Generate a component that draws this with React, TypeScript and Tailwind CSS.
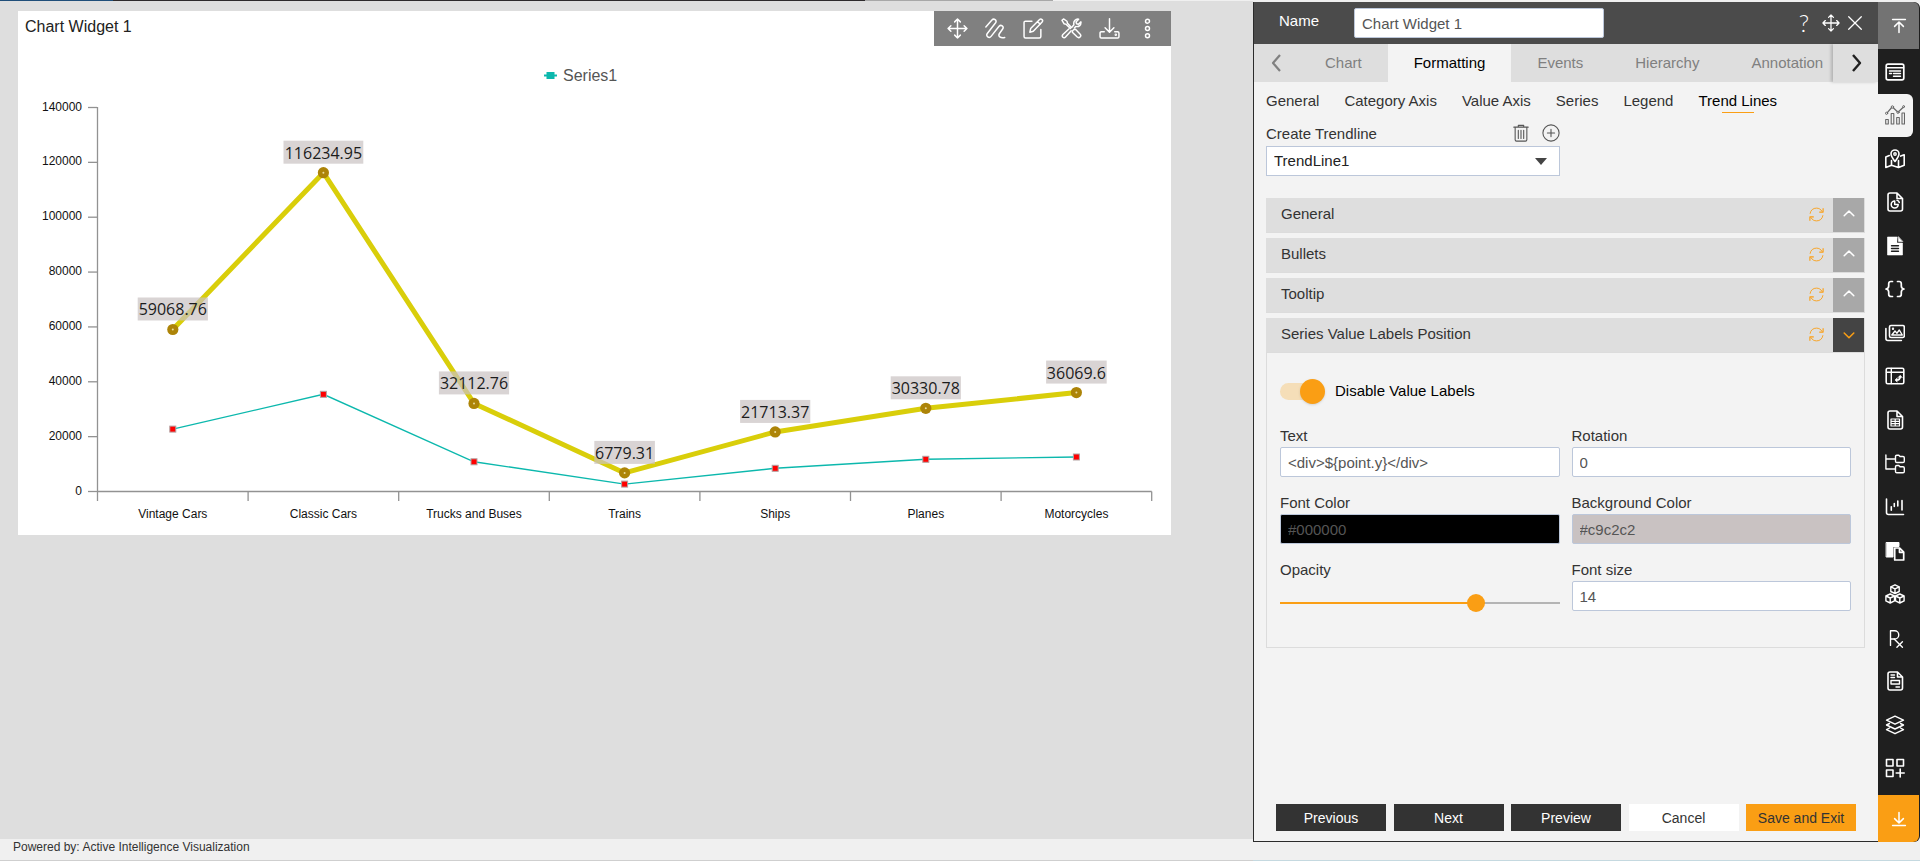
import { useState } from 'react';
import type { ReactNode } from 'react';
import { TbPrescription } from 'react-icons/tb';

type Point = { name: string; value: number; trend: number };

const points: Point[] = [
  { name: 'Vintage Cars', value: 22750, trend: 59068.76 },
  { name: 'Classic Cars', value: 35430, trend: 116234.95 },
  { name: 'Trucks and Buses', value: 10830, trend: 32112.76 },
  { name: 'Trains', value: 2700, trend: 6779.31 },
  { name: 'Ships', value: 8460, trend: 21713.37 },
  { name: 'Planes', value: 11740, trend: 30330.78 },
  { name: 'Motorcycles', value: 12580, trend: 36069.6 },
];

const yTicks = [0, 20000, 40000, 60000, 80000, 100000, 120000, 140000];

const tabs = ['Chart', 'Formatting', 'Events', 'Hierarchy', 'Annotation'];
const subTabs = ['General', 'Category Axis', 'Value Axis', 'Series', 'Legend', 'Trend Lines'];
const sections = ['General', 'Bullets', 'Tooltip', 'Series Value Labels Position'];

function Icon({ children, className = 'size-5' }: { children: ReactNode; className?: string }) {
  return (
    <svg
      viewBox="0 0 20 20"
      className={className}
      fill="none"
      stroke="currentColor"
      strokeWidth="1.4"
      strokeLinecap="round"
      strokeLinejoin="round"
      aria-hidden="true"
    >
      {children}
    </svg>
  );
}

const moveIcon = <path d="M10 1v18M1 10h18M7.3 3.7 10 1l2.7 2.7M7.3 16.3 10 19l2.7-2.7M3.7 7.3 1 10l2.7 2.7M16.3 7.3 19 10l-2.7 2.7" />;

const toolbar: { label: string; icon: ReactNode }[] = [
  { label: 'Move', icon: moveIcon },
  {
    label: 'Trend',
    icon: <path d="M.8 8.5 6.6 1.9c1.9-2 5 .3 3.5 2.6L2.2 14.8c-1.700 2.400 1.700 5 3.600 2.700l7.600-9.600c1.800-2.100 5 .3 3.400 2.600l-3 4.300c-1.700 2.500.8 4.700 5 3.800" />,
  },
  {
    label: 'Edit',
    icon: (
      <>
        <path d="M8.500 3H2.400C1.600 3 1 3.600 1 4.400v13.200c0 .8.600 1.400 1.400 1.400h13.200c.8 0 1.400-.6 1.400-1.400V11" />
        <path d="m6.500 13.500.8-3.400 8.500-8.600c1.500-1.400 3.900.7 2.400 2.400l-8.400 8.700zM14 3.500l2.400 2.400" />
      </>
    ),
  },
  {
    label: 'Tools',
    icon: (
      <>
        <path d="m1 2.200 1.400-1.300 3.300 2.200.5 2L10 9M1 2.200l2 3.300 2 .6 4 3.900M12.300 11l1.500-.3 4.500 4.700c1.600 1.800-1 4.300-2.800 2.700l-4.700-4.600.3-1.400z" />
        <path d="M7.700 10.200 1.800 15.800c-1.600 1.700.9 4.100 2.500 2.400l5.400-6M10.500 8.500l1.800-2.100c-.8-3 1.500-5.700 4.500-5.300l-2.500 2.600.5 1.800 1.800.5 2.400-2.300c.3 3-1.800 5-5 4.400L12.800 9.500" />
      </>
    ),
  },
  {
    label: 'Download',
    icon: (
      <>
        <path d="M10 .8v12.500M5.800 9.300l4.200 4.200 4.200-4.200M5 13H2.200c-.7 0-1.200.5-1.200 1.200v3.600c0 .7.500 1.200 1.200 1.200h15.600c.7 0 1.200-.5 1.200-1.200v-3.600c0-.7-.5-1.200-1.200-1.200H15" />
        <circle cx="16" cy="16" r=".5" />
      </>
    ),
  },
  {
    label: 'More',
    icon: (
      <>
        <circle cx="10" cy="3" r="1.9" />
        <circle cx="10" cy="10" r="1.9" />
        <circle cx="10" cy="17" r="1.9" />
      </>
    ),
  },
];

const rail: { label: string; icon: ReactNode }[] = [
  {
    label: 'Form',
    icon: (
      <>
        <rect x="1.200" y="2.200" width="17.600" height="15.600" rx="1.800" strokeWidth="1.700" />
        <path d="M1.500 5.700h17M4.500 9h11M4.500 11.500h2M8.500 11.500h7M8.500 14.300h7" />
      </>
    ),
  },
  {
    label: 'Chart',
    icon: (
      <>
        <path d="M.7 14.500h2.600V19H.7zM6.200 8.500h2.600V19H6.200zM11.700 12.500h2.600V19h-2.600zM17 8h2.500v11H17z" strokeWidth="1.100" />
        <path d="M2.500 7.300 6.300 3M8.500 3l3.700 3.500M14 6.300 18 2.500" strokeWidth="1.200" />
        <circle cx="1.600" cy="8.300" r="1.100" strokeWidth="1" />
        <circle cx="7.400" cy="2" r="1.200" strokeWidth="1" />
        <circle cx="13" cy="7.300" r="1.100" strokeWidth="1" />
        <circle cx="18.700" cy="1.600" r="1" strokeWidth="1" />
      </>
    ),
  },
  {
    label: 'Map',
    icon: (
      <>
        <path d="M10 12.500C8 9.800 6 7.300 6 5a4 4 0 0 1 8 0c0 2.300-2 4.800-4 7.500z" strokeWidth="1.600" />
        <circle cx="10" cy="5" r="1.200" />
        <path d="M4.300 6.500.8 8v10.500l5.700-2.300 7 2.300 5.700-2.300V5.800l-3.500 1.300M6.500 11.500v4.700M13.500 11.500v7" strokeWidth="1.600" />
      </>
    ),
  },
  {
    label: 'Report',
    icon: (
      <>
        <path d="M12 1H5C3.800 1 3 1.800 3 3v14c0 1.200.8 2 2 2h10.500c1.200 0 2-.8 2-2V6.500zM12 1v5.500h5.500" strokeWidth="1.600" />
        <path d="M9.700 8.900a3.500 3.500 0 1 0 3.500 3.500H9.700zM12 8.300c1.200.2 2 1 2.300 2.200" strokeWidth="1.500" />
      </>
    ),
  },
  {
    label: 'Document',
    icon: (
      <>
        <path d="M12 1H2.500v18h15V7H12z" fill="currentColor" strokeWidth=".6" />
        <path d="M13.500 1v4.500h4z" fill="currentColor" strokeWidth=".6" />
        <path d="M6.500 9.800h7M6.500 12.500h7M6.500 15.200h7" stroke="#1f1f1f" />
      </>
    ),
  },
  {
    label: 'Code',
    icon: (
      <path
        d="M7.500 2.500H6C4.500 2.500 3.700 3.400 3.700 4.800V7c0 1.500-.8 2.600-2.700 3 1.900.4 2.700 1.500 2.700 3v2.200c0 1.400.8 2.300 2.300 2.300h1.500M12.500 2.500H14c1.500 0 2.300.9 2.300 2.300V7c0 1.500.8 2.600 2.700 3-1.900.4-2.700 1.500-2.700 3v2.200c0 1.400-.8 2.300-2.300 2.300h-1.500"
        strokeWidth="1.700"
      />
    ),
  },
  {
    label: 'Images',
    icon: (
      <>
        <rect x="4.500" y="2.500" width="14.800" height="12" rx="1.500" strokeWidth="1.600" />
        <path d="M.9 5.500v10c0 1.200.8 2 2 2h13.500" strokeWidth="1.600" />
        <path d="m6.800 12 3.200-4 2 2.200 2.300-3.200 3 5z" />
        <circle cx="8" cy="5.700" r=".5" />
      </>
    ),
  },
  {
    label: 'Pivot',
    icon: (
      <>
        <rect x="1.200" y="2.200" width="17.600" height="15.600" rx="1.500" strokeWidth="1.600" />
        <path d="M1.500 6.300h17M6.300 2.500v15" />
        <path d="M11.500 14c2.200.2 3.700-1.100 3.700-3.300" strokeWidth="1.700" />
        <path d="m12 12-2 2 2 2zM13.200 11.300l2-2 2 2z" fill="currentColor" strokeWidth=".5" />
      </>
    ),
  },
  {
    label: 'Spreadsheet',
    icon: (
      <>
        <path d="M12 1H5C3.800 1 3 1.800 3 3v14c0 1.200.8 2 2 2h10.500c1.200 0 2-.8 2-2V6.500zM12 1v5.500h5.500" strokeWidth="1.600" />
        <path d="M6 9h8.500v7H6zM6 11.300h8.500M6 13.700h8.500M10.200 9v7" strokeWidth="1.200" />
      </>
    ),
  },
  {
    label: 'Tree',
    icon: (
      <>
        <path d="M.9 1v14h9M.9 5h9" />
        <path d="M10.500 2.500c0-.8.500-1.300 1.300-1.300h2l1.200 1.300h3c.8 0 1.300.5 1.300 1.300v3.400c0 .8-.5 1.300-1.300 1.300h-6.200c-.8 0-1.300-.5-1.300-1.300zM10.500 12.800c0-.8.500-1.300 1.300-1.300h2l1.200 1.300h3c.8 0 1.300.5 1.300 1.300v3.400c0 .8-.5 1.300-1.300 1.300h-6.200c-.8 0-1.300-.5-1.300-1.300z" />
      </>
    ),
  },
  {
    label: 'Analysis',
    icon: <path d="M1.500 2v13.500c0 1.400.7 2 2 2h15M6.300 9.800v3.500M9.300 6.500v3M12.800 4v5M17 3.500v9.500" strokeWidth="1.600" />,
  },
  {
    label: 'Paste',
    icon: (
      <>
        <path d="M1.500 1.500h12.500v4H8v10.500H1.500z" fill="currentColor" strokeWidth="1" />
        <path d="M9.700 7h5l4 4.200V19h-9zM14.500 7v4.300h4.200" strokeWidth="1.700" />
      </>
    ),
  },
  {
    label: 'Cubes',
    icon: (
      <path
        d="m10 .8 4.200 2v4.700l-4.200 2-4.200-2V2.800zM5.800 2.800l4.200 2 4.200-2M10 4.800v4.700M5.200 10l4.300 2v4.900l-4.300 2.100-4.300-2.100V12zM.9 12l4.300 2 4.300-2M5.200 14v5M14.800 10l4.300 2v4.900L14.800 19l-4.300-2.100V12zM10.500 12l4.300 2 4.300-2M14.800 14v5"
        strokeWidth="1.400"
      />
    ),
  },
  { label: 'Script', icon: <TbPrescription className="size-[22px] stroke-[1.5]" /> },
  {
    label: 'Template',
    icon: (
      <>
        <path d="M12.500 1H5C3.800 1 3 1.800 3 3v14c0 1.200.8 2 2 2h10.500c1.200 0 2-.8 2-2V6zM12.500 1v5h5" strokeWidth="1.600" />
        <path d="M6 4h3.500M6 6.500h3.500M6 9.500h8.500V13H6zM11 16h3.500" />
      </>
    ),
  },
  {
    label: 'Layers',
    icon: <path d="m10 1.200 8.500 4L10 9.200l-8.500-4zM4.500 8.500l-3 1.500 8.500 4 8.500-4-3-1.500M4.500 13l-3 1.700 8.500 4 8.500-4-3-1.700" />,
  },
  {
    label: 'Add widget',
    icon: <path d="M1.500 1.500H8V8H1.500zM12 1.500h6.500V8H12zM1.500 12H8v6.500H1.500zM15.200 11v8M11.200 15h8" strokeWidth="1.600" />,
  },
];

// plot area inside the svg
const LEFT = 79.5;
const BASE = 445.5;
const STEP = 150.6;
const yPos = (v: number) => BASE - (v / 140000) * 384;
const xPos = (i: number) => LEFT + STEP * (i + 0.5);

function Chart() {
  const line = (key: 'value' | 'trend') => points.map((p, i) => `${xPos(i)},${yPos(p[key])}`).join(' ');

  return (
    <svg viewBox="0 0 1153 489" className="block w-full" role="img" aria-label="Line chart of Series1 with trend line">
      <path d="M526 29.500h13" stroke="#0cb8ad" strokeWidth="2" />
      <rect x="528.500" y="26" width="8" height="7" fill="#0cb8ad" />
      <text x="545" y="35" fontSize="16" fill="#555">Series1</text>

      <g stroke="#929292" strokeWidth="1.300">
        <path d={`M${LEFT} 61V455M${LEFT} ${BASE}h1054.200`} />
        {yTicks.map((t) => <path key={t} d={`M70 ${yPos(t)}h9`} />)}
        {[1, 2, 3, 4, 5, 6, 7].map((i) => <path key={i} d={`M${LEFT + STEP * i} ${BASE}v9.500`} />)}
      </g>

      <g fontSize="12" fill="#111">
        {yTicks.map((t) => (
          <text key={t} x="64" y={yPos(t) + 3} textAnchor="end">{t}</text>
        ))}
        {points.map((p, i) => (
          <text key={p.name} x={xPos(i)} y="472" textAnchor="middle">{p.name}</text>
        ))}
      </g>

      <polyline points={line('value')} fill="none" stroke="#0cb8ad" strokeWidth="1.400" />
      {points.map((p, i) => (
        <rect key={p.name} x={xPos(i) - 3} y={yPos(p.value) - 3} width="6" height="6" fill="#f00" stroke="#b3a3a3" />
      ))}

      <polyline points={line('trend')} fill="none" stroke="#d9ce0a" strokeWidth="5" strokeLinejoin="round" />
      {points.map((p, i) => {
        const label = String(p.trend);
        const w = (label.length - 1) * 9.6 + 3;
        return (
          <g key={p.name}>
            <circle cx={xPos(i)} cy={yPos(p.trend)} r="5.600" fill="#ad8408" />
            <circle cx={xPos(i)} cy={yPos(p.trend)} r="1" fill="#eadb9c" />
            <rect x={xPos(i) - w / 2} y={yPos(p.trend) - 32} width={w} height="23" fill="#c9c2c2" opacity=".7" />
            <text
              x={xPos(i)}
              y={yPos(p.trend) - 14}
              fontSize="16"
              fill="#1c1c1c"
              textAnchor="middle"
              className="font-['Open_Sans','Noto_Sans',sans-serif]"
            >
              {label}
            </text>
          </g>
        );
      })}
    </svg>
  );
}

const inputClass = 'block h-[30px] w-full rounded-xs border border-[#bcc7da] bg-white px-[7px] text-[15px] text-[#555] outline-none';

function Field({ id, label, children }: { id: string; label: string; children: ReactNode }) {
  return (
    <div>
      <label htmlFor={id} className="block h-5 leading-[18px]">{label}</label>
      {children}
    </div>
  );
}

function ValueLabelsForm() {
  const [enabled, setEnabled] = useState(true);
  const [text, setText] = useState('<div>${point.y}</div>');
  const [rotation, setRotation] = useState('0');
  const [fontColor, setFontColor] = useState('#000000');
  const [bgColor, setBgColor] = useState('#c9c2c2');
  const [opacity, setOpacity] = useState(0.7);
  const [fontSize, setFontSize] = useState('14');

  return (
    <div className="border border-t-0 border-[#dcdcdc] px-[13px] pt-[26px] pb-[22px]">
      <div className="flex h-6 items-center">
        <input
          id="value-labels"
          type="checkbox"
          checked={enabled}
          onChange={(e) => setEnabled(e.target.checked)}
          className="h-[17px] w-10 shrink-0 appearance-none rounded-full bg-[#d0d0d0] before:block before:size-[25px] before:-translate-y-1 before:rounded-full before:bg-white before:shadow before:content-[''] checked:bg-[#f5deb8] checked:before:translate-x-5 checked:before:bg-[#fa9e14]"
        />
        <label htmlFor="value-labels" className="pl-[15px] text-black">Disable Value Labels</label>
      </div>

      <div className="mt-6 grid grid-cols-2 gap-x-3 gap-y-[17px]">
        <Field id="text" label="Text">
          <input id="text" type="text" value={text} onChange={(e) => setText(e.target.value)} className={inputClass} />
        </Field>
        <Field id="rotation" label="Rotation">
          <input id="rotation" type="text" value={rotation} onChange={(e) => setRotation(e.target.value)} className={inputClass} />
        </Field>
        <Field id="font-color" label="Font Color">
          <input
            id="font-color"
            type="text"
            value={fontColor}
            onChange={(e) => setFontColor(e.target.value)}
            className={inputClass}
            style={{ backgroundColor: fontColor }}
          />
        </Field>
        <Field id="bg-color" label="Background Color">
          <input
            id="bg-color"
            type="text"
            value={bgColor}
            onChange={(e) => setBgColor(e.target.value)}
            className={inputClass}
            style={{ backgroundColor: bgColor }}
          />
        </Field>
        <Field id="opacity" label="Opacity">
          <div className="relative flex h-11 items-center">
            <div className="h-0.5 w-full bg-[#b4b4b4]">
              <div className="h-full bg-[#fa9e14]" style={{ width: `${opacity * 100}%` }} />
            </div>
            <input
              id="opacity"
              type="range"
              min="0"
              max="1"
              step="0.1"
              value={opacity}
              onChange={(e) => setOpacity(Number(e.target.value))}
              className="absolute inset-y-0 -left-[9px] w-[calc(100%+18px)] appearance-none bg-transparent [&::-webkit-slider-thumb]:size-[18px] [&::-webkit-slider-thumb]:appearance-none [&::-webkit-slider-thumb]:rounded-full [&::-webkit-slider-thumb]:bg-[#fa9e14]"
            />
          </div>
        </Field>
        <Field id="font-size" label="Font size">
          <input id="font-size" type="text" value={fontSize} onChange={(e) => setFontSize(e.target.value)} className={inputClass} />
        </Field>
      </div>
    </div>
  );
}

export default function App() {
  const [tab, setTab] = useState('Formatting');
  const [subTab, setSubTab] = useState('Trend Lines');
  const [open, setOpen] = useState('Series Value Labels Position');
  const [tool, setTool] = useState('Chart');
  const [name, setName] = useState('Chart Widget 1');

  const buttonClass = 'h-[27px] w-[110px] text-sm';

  return (
    <div className="flex h-screen bg-[#f0f0f0] font-['Liberation_Sans',Arial,sans-serif] text-[15px] text-[#333]">
      <div className="flex min-w-0 flex-1 flex-col">
        <div className="flex h-px shrink-0">
          <div className="w-[9%] bg-[#1f4e79]" />
          <div className="w-[60%] bg-[#2e2a2c]" />
          <div className="w-[15%] bg-[#a8a8a8]" />
        </div>

        <main className="flex-1 bg-[#dedede] pt-2.5 pr-[82px] pl-[18px]">
          <section className="bg-white">
            <header className="flex h-[35px] items-center">
              <h1 className="flex-1 pb-1 pl-[7px] text-base leading-5 text-[#222]">{name}</h1>
              <div className="flex h-full items-center gap-[17px] bg-[#808080] px-[13px] text-white">
                {toolbar.map((t) => (
                  <button key={t.label} aria-label={t.label} className="flex">
                    <Icon className="size-[21px]">{t.icon}</Icon>
                  </button>
                ))}
              </div>
            </header>
            <Chart />
          </section>
        </main>

        <footer className="flex h-[22px] shrink-0 items-center border-b border-[#cfcfcf] pb-[5px] pl-[13px] text-xs">
          Powered by: Active Intelligence Visualization
        </footer>
      </div>

      <div className="flex w-[667px] shrink-0 border-b border-[#c5d9e0] pt-0.5 pb-[18px]">
        <aside className="flex min-w-0 flex-1 flex-col border-b border-l border-[#2b2b2b] bg-[#f3f3f3]">
          <div className="flex h-[42px] shrink-0 items-center bg-[#4b4b4b] pr-[14px] pl-[25px] text-white">
            <label htmlFor="name" className="w-[75px] pb-1">Name</label>
            <input
              id="name"
              type="text"
              value={name}
              onChange={(e) => setName(e.target.value)}
              className="h-[30px] w-[250px] rounded-xs border border-[#bcc7da] bg-white px-[7px] text-[15px] text-[#555] outline-none"
            />
            <div className="ml-auto flex items-center gap-1.5">
              <button aria-label="Help" className="w-6 font-[Lato,sans-serif] text-2xl leading-6 font-light">?</button>
              <button aria-label="Move panel"><Icon className="size-[18px]">{moveIcon}</Icon></button>
              <button aria-label="Close"><Icon className="size-[18px]"><path d="m3 3 14 14M17 3 3 17" /></Icon></button>
            </div>
          </div>

          <div className="flex h-[38px] shrink-0 bg-[#dedede]">
            <button aria-label="Scroll tabs left" className="grid w-[45px] shrink-0 place-items-center text-[#808080]">
              <Icon><path d="M13 2 6 10l7 8" strokeWidth="2.2" strokeLinecap="butt" /></Icon>
            </button>
            <div className="flex flex-1 overflow-hidden">
              {tabs.map((t) => (
                <button
                  key={t}
                  onClick={() => setTab(t)}
                  className={`shrink-0 px-[26px] ${tab === t ? 'bg-[#f3f3f3] text-black' : 'text-[#808080]'}`}
                >
                  {t}
                </button>
              ))}
            </div>
            <button
              aria-label="Scroll tabs right"
              className="grid w-[45px] shrink-0 place-items-center text-[#1f1f1f] shadow-[-2px_0_3px_rgba(0,0,0,0.2)]"
            >
              <Icon><path d="m7 2 7 8-7 8" strokeWidth="2.4" strokeLinecap="butt" /></Icon>
            </button>
          </div>

          <nav className="flex h-[38px] shrink-0 items-center gap-[25px] px-3">
            {subTabs.map((t) => (
              <button key={t} onClick={() => setSubTab(t)} className={`relative h-full ${subTab === t ? 'text-black' : ''}`}>
                {t}
                {subTab === t && <span className="absolute bottom-[7px] left-1/2 h-px w-8 -translate-x-1/2 bg-[#fa9e14]" />}
              </button>
            ))}
          </nav>

          <div className="flex-1 pt-1 pr-[13px] pl-3">
            <div className="w-[294px]">
              <div className="flex h-[22px] items-start justify-between">
                <label htmlFor="trendline" className="leading-5">Create Trendline</label>
                <div className="flex items-center gap-3 text-[#555]">
                  <button aria-label="Delete trendline">
                    <Icon className="size-[18px]">
                      <path d="M2 3.500h16M7 3V1.500h6V3M3.500 4v13.500c0 .9.600 1.500 1.500 1.500h10c.9 0 1.500-.6 1.500-1.500V4M7 7v9M10 7v9M13 7v9" strokeWidth="1.200" />
                    </Icon>
                  </button>
                  <button aria-label="Add trendline">
                    <Icon className="size-[18px]">
                      <circle cx="10" cy="10" r="9" strokeWidth="1.200" />
                      <path d="M10 6v8M6 10h8" strokeWidth="1.200" />
                    </Icon>
                  </button>
                </div>
              </div>
              <div className="relative">
                <select id="trendline" className="h-[30px] w-full appearance-none border border-[#bcc7da] bg-white px-[7px] text-[15px] text-[#222]">
                  <option>TrendLine1</option>
                </select>
                <svg viewBox="0 0 12 7" className="pointer-events-none absolute top-3 right-[13px] h-[7px] w-3 fill-[#444]" aria-hidden="true">
                  <path d="M0 0h12L6 7z" />
                </svg>
              </div>
            </div>

            <div className="mt-[22px] flex flex-col gap-[5px]">
              {sections.map((s) => {
                const isOpen = open === s;
                return (
                  <section key={s}>
                    <div className="flex h-[35px] items-center border-r border-b border-[#dcdcdc] bg-[#dedede]">
                      <h2 className="flex-1 pb-px pl-[15px]">{s}</h2>
                      <button aria-label={`Reset ${s}`} className="mr-[9px] pb-0.5 text-[#fa9e14]">
                        <Icon className="size-[15px]">
                          <path d="M1.500 8.500C2.200 4 5.600 1.500 10 1.500c3.200 0 5.700 1.500 7.200 4M18.500 11.500c-.7 4.500-4.100 7-8.500 7-3.200 0-5.700-1.500-7.200-4" strokeWidth="1.200" />
                          <path d="M18.800 2.200v4.600h-4.600M1.200 17.800v-4.600h4.600" strokeWidth="1.500" />
                        </Icon>
                      </button>
                      <button
                        aria-label={`Toggle ${s}`}
                        aria-expanded={isOpen}
                        onClick={() => setOpen(isOpen ? '' : s)}
                        className={`grid h-full w-[31px] place-items-center ${isOpen ? 'bg-[#444] text-[#fa9e14]' : 'bg-[#a8a8a8] text-white'}`}
                      >
                        <Icon className="size-4">
                          <path d={isOpen ? 'm4 7.500 6 6 6-6' : 'm4 11 6-6 6 6'} strokeWidth="1.900" />
                        </Icon>
                      </button>
                    </div>
                    {isOpen && s === 'Series Value Labels Position' && <ValueLabelsForm />}
                  </section>
                );
              })}
            </div>
          </div>

          <div className="flex justify-between px-[22px] pb-[10px] text-white">
            <button className={`${buttonClass} bg-[#333]`}>Previous</button>
            <button className={`${buttonClass} bg-[#333]`}>Next</button>
            <button className={`${buttonClass} bg-[#333]`}>Preview</button>
            <button className={`${buttonClass} bg-white text-[#333]`}>Cancel</button>
            <button className={`${buttonClass} bg-[#fa9e14] text-[#333]`}>Save and Exit</button>
          </div>
        </aside>

        <div className="flex w-[42px] shrink-0 flex-col rounded-r-md bg-[#1f1f1f]">
          <button aria-label="Scroll to top" className="mr-px grid h-[47px] shrink-0 place-items-center rounded-tr-md bg-[#737373] text-white">
            <Icon className="size-4"><path d="M2 2h16M10 18V5.500M4.500 10.500 10 5l5.500 5.500" strokeWidth="1.900" /></Icon>
          </button>
          <div className="flex flex-1 flex-col pt-px pb-[5px]">
            {rail.map((r) => (
              <button
                key={r.label}
                aria-label={r.label}
                onClick={() => setTool(r.label)}
                className={`grid w-[35px] flex-1 place-items-center pr-px ${tool === r.label ? 'rounded-r-md bg-[#f3f3f3] text-[#666]' : 'text-white'}`}
              >
                <Icon>{r.icon}</Icon>
              </button>
            ))}
          </div>
          <button aria-label="Scroll to bottom" className="mr-px grid h-[47px] shrink-0 place-items-center rounded-br-md bg-[#fa9e14] text-white">
            <Icon className="size-4"><path d="M2 18h16M10 2v12.500M4.500 9.500 10 15l5.500-5.500" strokeWidth="1.900" /></Icon>
          </button>
        </div>
      </div>
    </div>
  );
}
